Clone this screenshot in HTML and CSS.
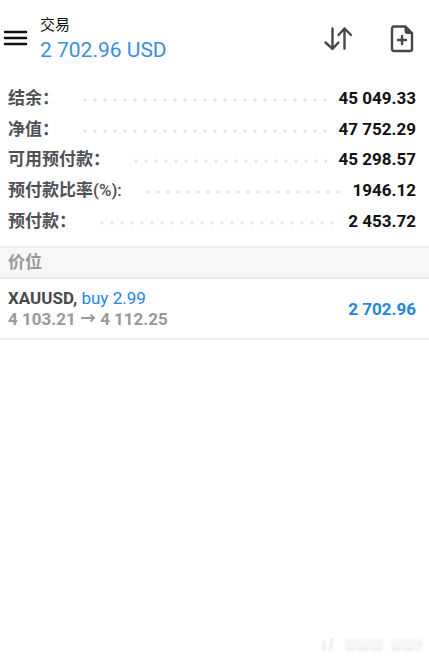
FILE: index.html
```html
<!DOCTYPE html>
<html lang="zh-CN">
<head>
    <meta charset="UTF-8">
    <meta name="viewport" content="width=device-width, initial-scale=1.0">
    <title>交易</title>
    <link rel="stylesheet" href="styles.css">
</head>
<body>
    <header class="topbar">
        <button class="icon-button menu-button" type="button" aria-label="菜单">
            <svg width="26" height="20" viewBox="0 0 26 20" fill="none" stroke="#111" stroke-width="2.6" stroke-linecap="round">
                <path d="M3 3H24M3 9H24M3 15H24"/>
            </svg>
        </button>
        <div class="heading">
            <h1>交易</h1>
            <div class="profit">2 702.96 USD</div>
        </div>
        <button class="icon-button sort-button" type="button" aria-label="排序">
            <svg width="30" height="26" viewBox="0 0 30 26" fill="none" stroke="#4b4646" stroke-width="2.4" stroke-linecap="round" stroke-linejoin="round">
                <path d="M9.5 2.5V22.5M2.5 16.5L9.5 22.8L15.5 16.5"/>
                <path d="M21.5 22.5V2.5M15.5 9L21.5 2.5L28 9"/>
            </svg>
        </button>
        <button class="icon-button" type="button" aria-label="新订单">
            <svg width="24" height="28" viewBox="0 0 24 28" fill="none" stroke="#4b4646" stroke-width="2.4" stroke-linecap="round" stroke-linejoin="round">
                <path d="M4 1.5H15.5L22 8V24Q22 26 20 26H4Q2 26 2 24V3.5Q2 1.5 4 1.5Z"/>
                <path d="M15 1.5V6.5Q15 8.5 17 8.5H22Z" fill="#4b4646" stroke-width="1"/>
                <path d="M12 11V19M8 15H16"/>
            </svg>
        </button>
    </header>

    <dl class="account">
        <div class="row"><dt>结余：</dt><dd>45 049.33</dd></div>
        <div class="row"><dt>净值：</dt><dd>47 752.29</dd></div>
        <div class="row"><dt>可用预付款：</dt><dd>45 298.57</dd></div>
        <div class="row"><dt>预付款比率<span class="unit">(%):</span></dt><dd>1946.12</dd></div>
        <div class="row"><dt>预付款：</dt><dd>2 453.72</dd></div>
    </dl>

    <h2 class="section-title">价位</h2>

    <div class="position">
        <div>
            <div class="symbol">XAUUSD, <span class="side">buy 2.99</span></div>
            <div class="prices">4 103.21
                <svg class="arrow" width="16" height="12" viewBox="0 0 16 12" fill="none" stroke="#999" stroke-width="1.8"><path d="M1 5H14M10.5 1.5L14.2 5L10.5 8.5"/></svg>
                4 112.25</div>
        </div>
        <div class="result">2 702.96</div>
    </div>

    <footer class="footer">
        <svg width="106" height="20" viewBox="0 0 106 20" aria-hidden="true">
            <g class="smudge">
                <path d="M3 6V16M11 3L9 16" stroke="#e2e2e2" stroke-width="2"/>
                <path d="M24 10H62M70 10H101" stroke="#f6f6f6" stroke-width="12"/>
                <path d="M25 14H33M38 14H48M52 14H60M71 14H80M84 14H92M96 9H102" stroke="#ececec" stroke-width="3"/>
            </g>
        </svg>
    </footer>
</body>
</html>
```

FILE: styles.css
```css
* {
    box-sizing: border-box;
}

body {
    margin: 0;
    min-height: 100vh;
    display: flex;
    flex-direction: column;
    background-color: #fff;
    color: #111;
    font-family: Roboto, "Noto Sans CJK SC", sans-serif;
}

h1, h2, dl, dd {
    margin: 0;
}

/* 顶部栏 */
.topbar {
    display: flex;
    align-items: center;
    padding: 14px 15px 12px 2px;
}

.icon-button {
    display: flex;
    padding: 0;
    border: none;
    background: none;
    cursor: pointer;
}

.heading {
    flex: 1;
    margin-left: 12px;
}

.heading h1 {
    font-size: 15px;
    font-weight: 400;
    line-height: 22px;
}

.profit {
    color: #3b8ee0;
    font-size: 21px;
    line-height: 28px;
}

.sort-button {
    margin-right: 37px;
}

/* 账户信息 */
.account {
    display: grid;
    grid-auto-rows: 1fr;
    min-height: 153px;
    margin: 7px 13px 10px 8px;
}

.row {
    display: flex;
    align-items: center;
    font-size: 17px;
    line-height: 24px;
    font-weight: 700;
}

.row dt {
    display: contents;
    color: #505156;
}

/* 标签和数值之间的点线 */
.row dt::after {
    content: "";
    flex: 1;
    height: 4px;
    margin: 4px 12px 0 21px;
    background: radial-gradient(circle at 5px 2px, #e2e2e5 1px, transparent 2px) 0 0 / 10px 4px repeat-x;
}

.row dd {
    color: #111;
}

.unit {
    font-weight: 500;
}

/* 持仓列表 */
.section-title {
    padding: 0 8px;
    border-top: 2px solid #ececec;
    border-bottom: 2px solid #e9e9e9;
    background-color: #f7f7f7;
    color: #999;
    font-size: 17px;
    font-weight: 700;
    line-height: 29px;
}

.position {
    display: flex;
    align-items: center;
    justify-content: space-between;
    padding: 9px 13px 8px 8px;
    border-bottom: 2px solid #eee;
    font-size: 17px;
    font-weight: 700;
    line-height: 21px;
}

.symbol {
    color: #48494d;
}

.side {
    color: #1c86ee;
    font-weight: 400;
}

.prices {
    color: #999;
}

.result {
    color: #2484e0;
}

.footer {
    display: flex;
    justify-content: flex-end;
    margin-top: auto;
    padding: 0 2px 4px;
}

.smudge {
    filter: blur(1px);
}
```
